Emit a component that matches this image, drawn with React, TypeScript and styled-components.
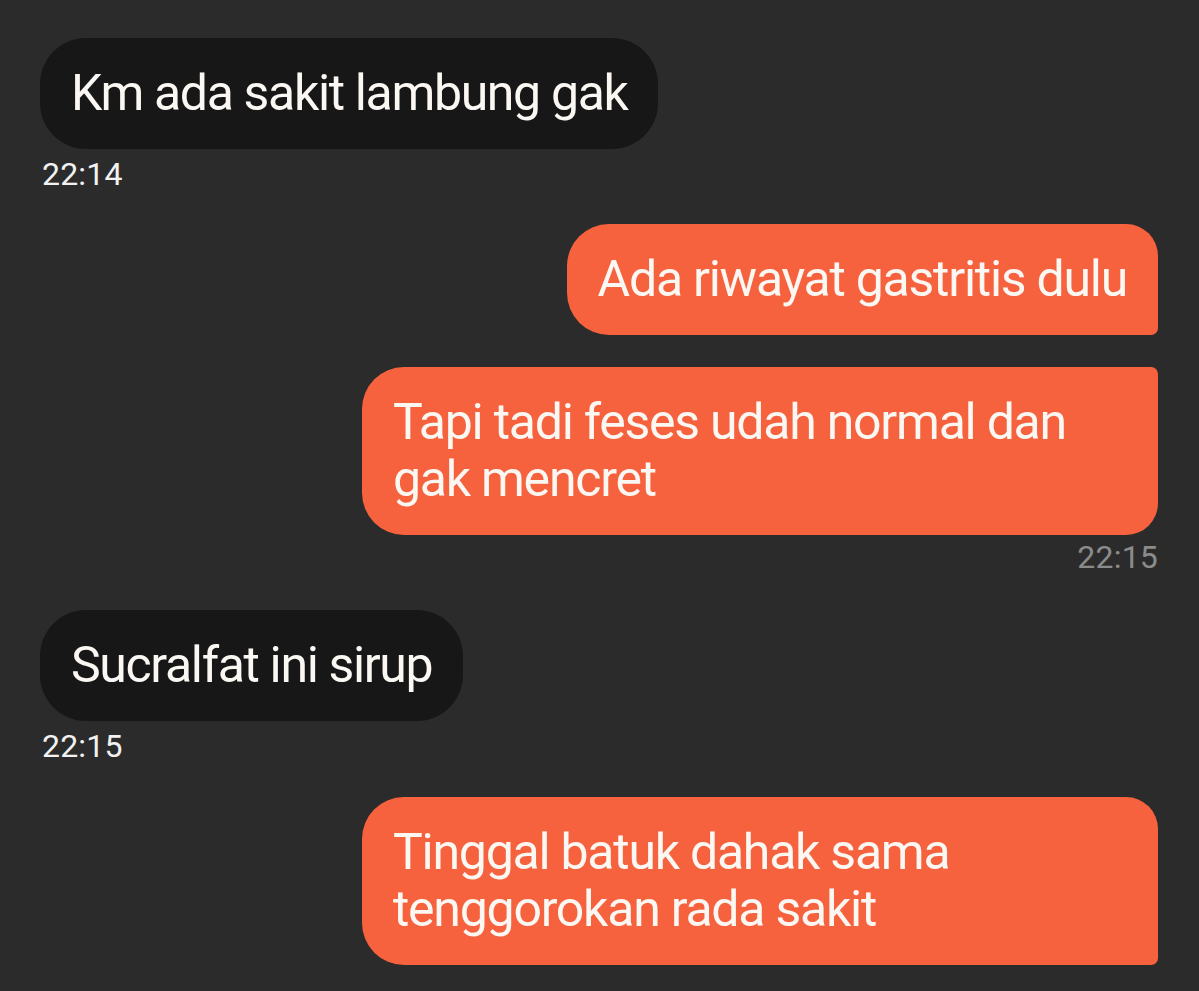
import styled, { createGlobalStyle } from "styled-components";

const GlobalStyle = createGlobalStyle`
  html, body {
    margin: 0;
    padding: 0;
    background: #2b2b2b;
  }
  body {
    font-family: Roboto, "Noto Sans", "Liberation Sans", sans-serif;
  }
`;

type Side = "in" | "out";

type Message = {
  side: Side;
  text: string;
  shape?: "first" | "last" | "single";
  time?: string;
  gapTop: number;
};

const messages: Message[] = [
  { side: "in", text: "Km ada sakit lambung gak", time: "22:14", gapTop: 0 },
  { side: "out", text: "Ada riwayat gastritis dulu", shape: "first", gapTop: 31 },
  { side: "out", text: "Tapi tadi feses udah normal dan gak mencret", shape: "last", time: "22:15", gapTop: 32 },
  { side: "in", text: "Sucralfat ini sirup", time: "22:15", gapTop: 34 },
  { side: "out", text: "Tinggal batuk dahak sama tenggorokan rada sakit", shape: "first", gapTop: 32 },
];

const Chat = styled.div`
  display: flex;
  flex-direction: column;
  padding: 38px 41px 0 40px;
  min-height: 991px;
  box-sizing: border-box;
`;

const Row = styled.div<{ $side: Side; $gap: number }>`
  display: flex;
  flex-direction: column;
  align-items: ${(p) => (p.$side === "out" ? "flex-end" : "flex-start")};
  margin-top: ${(p) => p.$gap}px;
`;

const radiusFor = (side: Side, shape?: string) => {
  if (side === "in") return "46px";
  if (shape === "first") return "42px 32px 7px 42px";
  if (shape === "last") return "42px 7px 32px 42px";
  return "42px";
};

const Bubble = styled.div<{ $side: Side; $shape?: string }>`
  box-sizing: border-box;
  max-width: 796px;
  padding: 27px 31px 27px 31px;
  border-radius: ${(p) => radiusFor(p.$side, p.$shape)};
  background: ${(p) => (p.$side === "out" ? "#f7623e" : "#171717")};
  color: #fbf7f3;
  font-size: 50px;
  line-height: 57px;
  letter-spacing: ${(p) => (p.$side === "out" ? "-1.25px" : "-1.35px")};
`;

const Time = styled.div<{ $side: Side }>`
  margin-top: ${(p) => (p.$side === "out" ? "3px" : "6px")};
  padding-left: 2px;
  font-size: 32px;
  line-height: 38px;
  letter-spacing: 0.2px;
  color: ${(p) => (p.$side === "out" ? "#8b8b8b" : "#f2f2f2")};
`;

export default function App() {
  return (
    <>
      <GlobalStyle />
      <Chat>
        {messages.map((m, i) => (
          <Row key={i} $side={m.side} $gap={m.gapTop}>
            <Bubble $side={m.side} $shape={m.shape}>
              {m.text}
            </Bubble>
            {m.time && <Time $side={m.side}>{m.time}</Time>}
          </Row>
        ))}
      </Chat>
    </>
  );
}
